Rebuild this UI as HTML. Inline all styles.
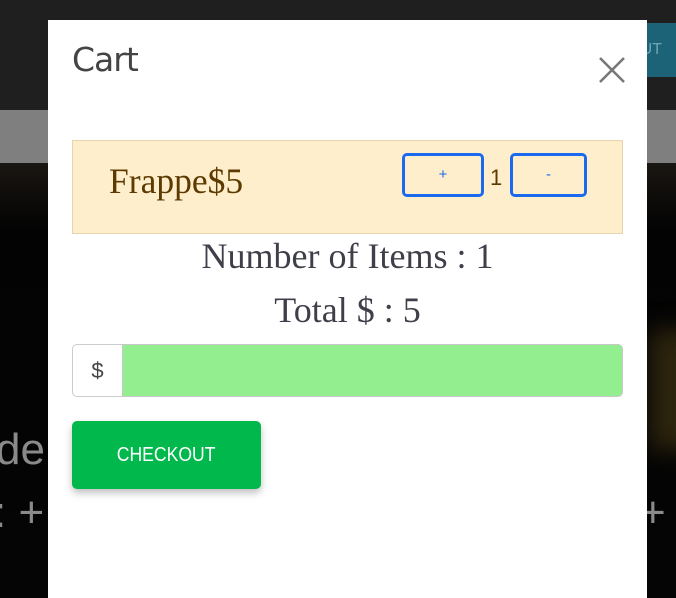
<!DOCTYPE html>
<html><head><meta charset="utf-8"><style>
*{margin:0;padding:0;box-sizing:border-box}
body{width:676px;height:598px;overflow:hidden;position:relative;background:#050505;font-family:"Liberation Sans",sans-serif}
.top{position:absolute;left:0;top:0;width:676px;height:110px;background:#1f1f1f}
.teal{position:absolute;left:600px;top:23px;width:76px;height:54px;background:#1d6378;color:#6fa6b6;font-size:16px;line-height:54px;text-align:right;padding-right:14px}
.gray{position:absolute;left:0;top:110px;width:676px;height:53px;background:#7f7f7f}
.hero{position:absolute;left:0;top:163px;width:676px;height:435px;background:linear-gradient(180deg,#1a1612 0%,#030303 15%,#050505 100%)}
.glow{position:absolute;left:650px;top:330px;width:60px;height:120px;background:#2e250e;filter:blur(12px)}
.sidetxt{position:absolute;color:#8a8a8a;font-family:"Liberation Sans",sans-serif}
.modal{position:absolute;left:48px;top:20px;width:599px;height:578px;background:#fff}
.title{position:absolute;left:24px;top:20px;font-size:33px;color:#444;font-family:"DejaVu Sans",sans-serif;letter-spacing:-1px}
.close{position:absolute;left:550px;top:36px}
.item{position:absolute;left:24px;top:120px;width:551px;height:94px;background:#ffeecc;border:1px solid #e6d4ad}
.name{position:absolute;left:36px;top:19px;font-family:"Liberation Serif",serif;font-size:35.5px;color:#5c3a00}
.btn{position:absolute;top:12px;width:82px;height:44px;border:3px solid #1a6af0;border-radius:5px;color:#1a6af0;font-size:15px;text-align:center;line-height:38px;background:transparent}
.qty{position:absolute;left:417px;top:24px;font-size:22px;color:#5c3a00}
.line{position:absolute;left:0;width:599px;text-align:center;font-family:"Liberation Serif",serif;font-size:36px;color:#3f3f4a}
.pre{position:absolute;left:24px;top:324px;width:51px;height:53px;border:1px solid #ccc;border-radius:5px 0 0 5px;background:#fff;font-size:22px;color:#444;text-align:center;line-height:51px}
.inp{position:absolute;left:74px;top:324px;width:501px;height:53px;border:1px solid #c8c8c8;border-radius:0 5px 5px 0;background:#93ee8f}
.co{position:absolute;left:24px;top:401px;width:189px;height:68px;background:#00b84c;border-radius:5px;color:#fff;font-size:20px;text-align:center;line-height:68px;box-shadow:0 4px 8px rgba(0,0,0,.25)}
.co span{display:inline-block;transform:scaleX(.88)}
</style></head><body>
<div class="top"></div>
<div class="teal">UT</div>
<div class="gray"></div>
<div class="hero"></div>
<div class="glow"></div>
<div class="sidetxt" style="left:-4px;top:425px;font-size:44px">de</div>
<div class="sidetxt" style="left:-6px;top:488px;font-size:44px">: +</div>
<div class="sidetxt" style="left:640px;top:488px;font-size:44px">+</div>
<div class="modal">
<div class="title">Cart</div>
<svg class="close" width="28" height="28" viewBox="0 0 28 28"><path d="M2 2L26 26M26 2L2 26" stroke="#777" stroke-width="2.6"/></svg>
<div class="item">
<div class="name">Frappe$5</div>
<div class="btn" style="left:329px">+</div>
<div class="qty">1</div>
<div class="btn" style="left:437px;width:77px">-</div>
</div>
<div class="line" style="top:215px">Number of Items : 1</div>
<div class="line" style="top:269px">Total $ : 5</div>
<div class="pre">$</div>
<div class="inp"></div>
<div class="co"><span>CHECKOUT</span></div>
</div>
</body></html>
